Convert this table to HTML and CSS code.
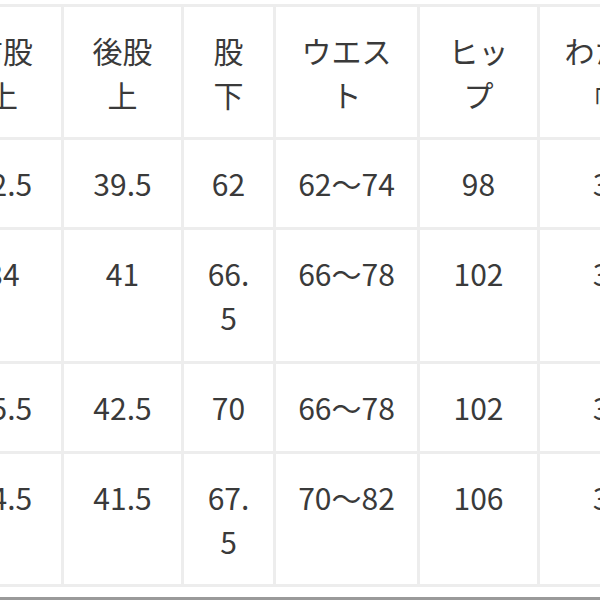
FILE: index.html
```html
<!DOCTYPE html>
<html lang="ja">
<head>
<meta charset="utf-8">
<title>サイズ表</title>
<link rel="stylesheet" href="styles.css">
</head>
<body>
<div class="page">
  <table class="size-table">
    <colgroup>
      <col class="c1"><col class="c2"><col class="c3"><col class="c4"><col class="c5"><col class="c6">
    </colgroup>
    <thead>
      <tr>
        <th>前股上</th><th>後股上</th><th>股下</th><th>ウエスト</th><th>ヒップ</th><th>わたり幅</th>
      </tr>
    </thead>
    <tbody>
      <tr class="single"><td>32.5</td><td>39.5</td><td>62</td><td>62〜74</td><td>98</td><td>31</td></tr>
      <tr class="double"><td>34</td><td>41</td><td>66.5</td><td>66〜78</td><td>102</td><td>32</td></tr>
      <tr class="single"><td>35.5</td><td>42.5</td><td>70</td><td>66〜78</td><td>102</td><td>33</td></tr>
      <tr><td>34.5</td><td>41.5</td><td>67.5</td><td>70〜82</td><td>106</td><td>34</td></tr>
    </tbody>
  </table>
  <div class="bottom-bar"></div>
</div>
</body>
</html>
```

FILE: styles.css
```css
html, body {
  margin: 0;
  padding: 0;
  background: #ffffff;
  overflow: hidden;
  width: 600px;
  height: 600px;
}

.page {
  width: 600px;
  height: 600px;
  overflow: hidden;
  padding-top: 4px;
  box-sizing: border-box;
}

.size-table {
  margin-left: -58px;
  border-collapse: separate;
  border-spacing: 0;
  table-layout: fixed;
  width: 740px;
  border-top: 3px solid #ededed;
  border-left: 3px solid #ededed;
  font-family: "Noto Sans CJK JP", "Noto Sans", sans-serif;
  font-size: 30px;
  line-height: 44px;
  color: #3a3a3a;
}

.c1 { width: 119px; }
.c2 { width: 120px; }
.c3 { width: 92px; }
.c4 { width: 144px; }
.c5 { width: 120px; }
.c6 { width: 142px; }

.size-table th,
.size-table td {
  box-sizing: border-box;
  padding: 21px 18px 21px 18px;
  border-right: 3px solid #ededed;
  border-bottom: 3px solid #ededed;
  text-align: center;
  vertical-align: top;
  font-weight: 400;
  word-break: break-all;
  overflow-wrap: anywhere;
}

.size-table tr.single td,
.size-table tr.double td {
  padding-bottom: 22px;
}

.bottom-bar {
  margin-top: 10px;
  height: 3px;
  background: #9a9a9a;
}
```
